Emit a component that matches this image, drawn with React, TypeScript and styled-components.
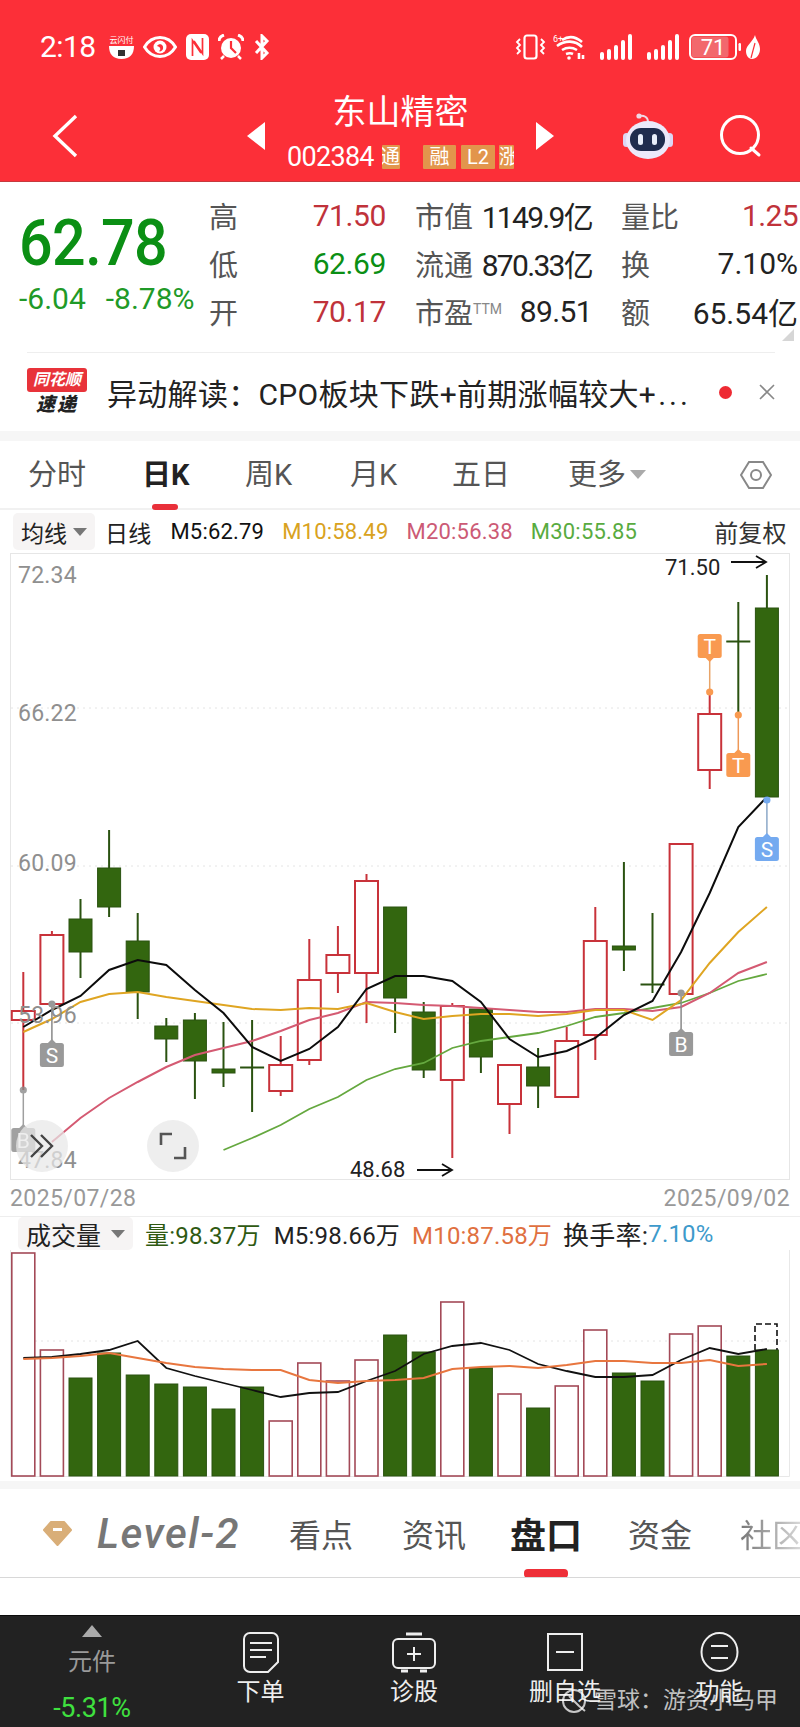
import React from "react"
import styled, { createGlobalStyle } from "styled-components"

const GlobalStyle = createGlobalStyle`
    html, body {
        margin: 0;
        padding: 0;
        background: #fff;
    }
    body {
        font-family: Roboto, "Noto Sans CJK SC", sans-serif;
    }
    #root {
        width: 800px;
        height: 1727px;
        overflow: hidden;
    }
`

const RED = "#c8323a"
const GREEN = "#33660f"
const GREEN_DARK = "#2a5210"

// chart coordinates are page pixels, the svg viewBox starts where the panel starts
const slotX = (i: number) => 23.3 + 28.6 * i

type Candle = [up: boolean, high: number, top: number, bottom: number, low: number]

const CANDLES: Candle[] = [
    [true, 972, 1011, 1020, 1090],
    [true, 931, 935, 1004, 1004],
    [false, 899, 919, 952, 978],
    [false, 830, 868, 907, 917],
    [false, 913, 941, 992, 1019],
    [false, 1018, 1026, 1039, 1062],
    [false, 1013, 1020, 1061, 1099],
    [false, 1022, 1069, 1073, 1087],
    [false, 1020, 1067, 1068, 1112],
    [true, 1036, 1065, 1091, 1096],
    [true, 939, 980, 1060, 1065],
    [true, 926, 955, 973, 993],
    [true, 874, 881, 973, 1023],
    [false, 907, 907, 998, 1033],
    [false, 1002, 1012, 1070, 1078],
    [true, 1003, 1006, 1080, 1158],
    [false, 1009, 1009, 1057, 1073],
    [true, 1065, 1065, 1104, 1134],
    [false, 1048, 1067, 1086, 1108],
    [true, 1027, 1041, 1097, 1097],
    [true, 907, 941, 1035, 1060],
    [false, 862, 946, 950, 971],
    [false, 913, 984, 985, 993],
    [true, 844, 844, 994, 994],
    [true, 692, 714, 770, 789],
    [false, 602, 641, 642, 713],
    [false, 575, 608, 797, 797],
]

const MA5 = [1027, 1010, 996, 970, 960, 965, 990, 1013, 1047, 1061, 1049, 1027, 989, 976, 976, 981, 1002, 1039, 1057, 1051, 1038, 1015, 1001, 952, 893, 827, 797]
const MA10 = [1032, 1019, 1002, 994, 992, 997, 1001, 1005, 1009, 1010, 1008, 1009, 1003, 1012, 1019, 1016, 1014, 1014, 1016, 1014, 1010, 1010, 1020, 1000, 963, 932, 907]
const MA20 = [1142, 1118, 1098, 1082, 1067, 1055, 1048, 1041, 1031, 1020, 1013, 1002, 1003, 1005, 1006, 1008, 1010, 1012, 1012, 1009, 1009, 1011, 1007, 993, 973, 962]
const MA30 = [1150, 1138, 1125, 1109, 1097, 1080, 1069, 1063, 1048, 1041, 1037, 1033, 1026, 1017, 1013, 1008, 1003, 993, 981, 974]

const VOLUMES: [boolean, number][] = [
    [true, 1253], [true, 1350], [false, 1378], [false, 1353], [false, 1375], [false, 1384], [false, 1387],
    [false, 1409], [false, 1387], [true, 1421], [true, 1363], [true, 1381], [true, 1360], [false, 1335],
    [false, 1352], [true, 1302], [false, 1368], [true, 1394], [false, 1408], [true, 1386], [true, 1330],
    [false, 1373], [false, 1381], [true, 1334], [true, 1326], [false, 1356], [false, 1350],
]

const VOL_MA5 = [1358, 1357, 1354, 1350, 1341, 1368, 1376, 1383, 1390, 1397, 1393, 1392, 1381, 1371, 1354, 1346, 1343, 1350, 1364, 1371, 1377, 1377, 1375, 1360, 1348, 1354, 1349]
const VOL_MA10 = [1359, 1358, 1356, 1353, 1358, 1363, 1367, 1369, 1370, 1370, 1380, 1383, 1381, 1380, 1378, 1369, 1367, 1366, 1368, 1365, 1361, 1361, 1363, 1363, 1360, 1366, 1364]

const linePoints = (values: number[], from = 0) =>
    values.map((y, i) => `${slotX(i + from).toFixed(1)},${y}`).join(" ")

const Page = styled.div`
    width: 800px;
    height: 1727px;
    display: flex;
    flex-direction: column;
    position: relative;
    color: #222;
`

/* red head */
const Header = styled.header`
    height: 181px;
    flex: none;
    background: #fc2f38;
    border-bottom: 1px solid #c63a3e;
    color: #fff;
`

const StatusBar = styled.div`
    height: 91px;
    box-sizing: border-box;
    padding: 2px 40px 0 40px;
    display: flex;
    align-items: center;
    justify-content: space-between;
`

const StatusGroup = styled.div`
    display: flex;
    align-items: center;
`

const StatusSlot = styled.span<{ $left: number }>`
    display: flex;
    margin-left: ${(p) => p.$left}px;
`

const Time = styled.span`
    font-size: 30px;
    width: 60px;
    letter-spacing: -0.6px;
`

const NavBar = styled.div`
    height: 90px;
    display: flex;
    align-items: center;
    padding-left: 52px;
`

const Ticker = styled.div`
    width: 271px;
    height: 90px;
    display: flex;
    flex-direction: column;
    align-items: center;
`

const StockName = styled.div`
    font-size: 34px;
    line-height: 38px;
    margin-top: 2px;
    letter-spacing: 0;
`

const CodeRow = styled.div`
    width: 227px;
    height: 24px;
    margin-top: 14px;
    display: flex;
    align-items: center;
    overflow: hidden;
`

const Code = styled.span`
    font-size: 27px;
    width: 95px;
    flex: none;
    letter-spacing: -0.7px;
`

const Tag = styled.span<{ $width: number; $clip?: "left" | "right"; $gap?: number }>`
    flex: none;
    width: ${(p) => p.$width}px;
    height: 24px;
    margin-left: ${(p) => p.$gap ?? 0}px;
    background: #e2954c;
    color: #fff;
    border-radius: 1px;
    font-size: 20px;
    line-height: 24px;
    display: flex;
    overflow: hidden;
    justify-content: ${(p) => (p.$clip === "left" ? "flex-end" : p.$clip === "right" ? "flex-start" : "center")};
    white-space: nowrap;
`

/* quote numbers */
const QuotePanel = styled.section`
    height: 170px;
    flex: none;
    display: flex;
    position: relative;
`

const PriceBlock = styled.div`
    width: 209px;
    flex: none;
    padding: 30px 0 0 19px;
    box-sizing: border-box;
`

const BigPrice = styled.div`
    font-size: 65px;
    line-height: 62px;
    font-weight: 500;
    color: #0b8f14;
    letter-spacing: -0.6px;
    transform: scaleX(0.91);
    transform-origin: left center;
`

const PriceChange = styled.div`
    display: flex;
    gap: 20px;
    margin-top: 8px;
    font-size: 30px;
    line-height: 34px;
    color: #1f9a28;
    white-space: nowrap;
`

const QuoteGrid = styled.div`
    padding-top: 9px;
    display: grid;
    grid-template-columns: 177px 177px 177px;
    grid-auto-rows: 48px;
    column-gap: 29px;
`

const QuoteCell = styled.div`
    display: flex;
    align-items: center;
    justify-content: space-between;
    white-space: nowrap;
`

const QuoteLabel = styled.span`
    font-size: 29px;
    color: #555;
`

const Sup = styled.sup`
    font-size: 14px;
    color: #888;
    vertical-align: 10px;
    line-height: 0;
`

const QuoteValue = styled.span<{ $color?: string; $spacing?: number }>`
    font-size: 30px;
    color: ${(p) => p.$color ?? "#222"};
    letter-spacing: ${(p) => p.$spacing ?? -0.6}px;
`

const CornerMark = styled.div`
    position: absolute;
    right: 6px;
    bottom: 11px;
    width: 12px;
    height: 12px;
    background: #d6d6d6;
    clip-path: polygon(100% 0, 100% 100%, 0 100%);
`

const NewsBar = styled.section`
    height: 79px;
    flex: none;
    margin: 0 25px 0 27px;
    border-top: 1px solid #eee;
    display: flex;
    align-items: center;
    position: relative;
    box-sizing: border-box;
`

const NewsLogo = styled.div`
    width: 60px;
    flex: none;
    text-align: center;
    margin-right: 20px;
`

const LogoTop = styled.div`
    background: #e8333a;
    color: #fff;
    font-size: 16px;
    line-height: 24px;
    font-style: italic;
    font-weight: 700;
    border-radius: 3px;
    white-space: nowrap;
`

const LogoBottom = styled.div`
    color: #222;
    font-size: 19px;
    line-height: 25px;
    font-style: italic;
    font-weight: 900;
    letter-spacing: 2px;
`

const NewsText = styled.div`
    font-size: 30px;
    color: #222;
    white-space: nowrap;
    flex: 1;
    letter-spacing: 0.3px;
`

const NewsDots = styled.span`
    letter-spacing: 3px;
    margin-left: 2px;
`

const RedDot = styled.span`
    width: 13px;
    height: 13px;
    border-radius: 50%;
    background: #ee2a33;
    margin-left: 28px;
    flex: none;
`

const Band = styled.div<{ $height: number }>`
    height: ${(p) => p.$height}px;
    flex: none;
    background: #f6f6f6;
`

/* period switcher */
const PeriodTabs = styled.nav`
    height: 69px;
    flex: none;
    box-sizing: border-box;
    padding-left: 28px;
    border-bottom: 2px solid #f1f1f1;
    display: grid;
    grid-template-columns: 114px 103px 105px 102px 116px 172px 32px;
    align-items: center;
    position: relative;
`

const PeriodTab = styled.span<{ $active?: boolean }>`
    font-size: 29px;
    line-height: 40px;
    color: ${(p) => (p.$active ? "#222" : "#555")};
    font-weight: ${(p) => (p.$active ? 700 : 400)};
    position: relative;
    display: flex;
    align-items: center;
    gap: 4px;
    white-space: nowrap;
    ${(p) =>
        p.$active &&
        `&::after {
            content: "";
            position: absolute;
            left: 10px;
            bottom: -15px;
            width: 26px;
            height: 6px;
            border-radius: 3px;
            background: #e9303a;
        }`}
`

const Caret = styled.span<{ $size?: number; $color?: string }>`
    display: inline-block;
    flex: none;
    width: 0;
    height: 0;
    border-left: ${(p) => p.$size ?? 7}px solid transparent;
    border-right: ${(p) => p.$size ?? 7}px solid transparent;
    border-top: ${(p) => (p.$size ?? 7) + 1}px solid ${(p) => p.$color ?? "#777"};
`

const MaRow = styled.div`
    height: 43px;
    flex: none;
    display: flex;
    align-items: center;
    padding-left: 13px;
    white-space: nowrap;
`

const Chip = styled.div<{ $width: number; $height: number }>`
    width: ${(p) => p.$width}px;
    height: ${(p) => p.$height}px;
    flex: none;
    box-sizing: border-box;
    padding-left: 8px;
    background: #f6f4f4;
    border-radius: 5px;
    display: flex;
    align-items: center;
    justify-content: space-between;
    padding-right: 8px;
`

const ChipLabel = styled.span<{ $size: number }>`
    font-size: ${(p) => p.$size}px;
    color: #222;
`

const Indicator = styled.span<{ $color: string; $left: number; $size?: number }>`
    color: ${(p) => p.$color};
    margin-left: ${(p) => p.$left}px;
    font-size: ${(p) => p.$size ?? 22}px;
    letter-spacing: 0.2px;
`

const ChartWrap = styled.div`
    height: 627px;
    flex: none;
    position: relative;
`

const ChartSvg = styled.svg`
    display: block;
    position: absolute;
    inset: 0;
`

const RoundButton = styled.div<{ $left: number }>`
    position: absolute;
    left: ${(p) => p.$left}px;
    top: 567px;
    width: 52px;
    height: 52px;
    border-radius: 50%;
    background: rgba(232, 232, 232, 0.72);
    display: flex;
    align-items: center;
    justify-content: center;
`

const DateRow = styled.div`
    height: 37px;
    flex: none;
    box-sizing: border-box;
    padding: 0 10px;
    border-bottom: 1px solid #eee;
    display: flex;
    align-items: center;
    justify-content: space-between;
    font-size: 23px;
    color: #999;
    letter-spacing: 0.4px;
`

const VolumeRow = styled.div`
    height: 33px;
    flex: none;
    display: flex;
    align-items: center;
    padding-left: 18px;
    white-space: nowrap;
`

/* news tabs under the chart */
const InfoTabs = styled.nav`
    height: 89px;
    flex: none;
    box-sizing: border-box;
    padding-left: 43px;
    border-bottom: 1px solid #d8d8d8;
    display: flex;
    align-items: center;
    overflow: hidden;
    position: relative;
    white-space: nowrap;
`

const LevelMark = styled.span`
    flex: none;
    font-size: 42px;
    font-style: italic;
    font-weight: 500;
    color: #777;
    margin: 0 52px 0 25px;
    width: 140px;
    letter-spacing: 1.5px;
`

const InfoTab = styled.span<{ $active?: boolean; $left: number; $faded?: boolean }>`
    margin-left: ${(p) => p.$left}px;
    flex: none;
    font-size: ${(p) => (p.$active ? 36 : 32)}px;
    font-weight: ${(p) => (p.$active ? 700 : 400)};
    color: ${(p) => (p.$active ? "#222" : "#555")};
    position: relative;
    ${(p) =>
        p.$faded &&
        `background: linear-gradient(90deg, #777, #ddd);
        -webkit-background-clip: text;
        background-clip: text;
        color: transparent;`}
    ${(p) =>
        p.$active &&
        `&::after {
            content: "";
            position: absolute;
            left: 14px;
            bottom: -19px;
            width: 44px;
            height: 9px;
            border-radius: 4px;
            background: #ee2f38;
        }`}
`

const Spacer = styled.div`
    flex: 1;
    background: #fff;
`

/* dark action bar */
const BottomBar = styled.footer`
    height: 112px;
    flex: none;
    box-sizing: border-box;
    background: #222;
    border-top: 1px solid #0c0c0c;
    display: grid;
    grid-template-columns: 184px 153px 154px 148px 161px;
    position: relative;
`

const BottomIndex = styled.div`
    display: flex;
    flex-direction: column;
    align-items: center;
    padding-top: 9px;
`

const IndexArrow = styled.span`
    width: 0;
    height: 0;
    border-left: 10px solid transparent;
    border-right: 10px solid transparent;
    border-bottom: 12px solid #aaa;
`

const IndexName = styled.span`
    font-size: 24px;
    line-height: 32px;
    margin-top: 9px;
    color: #9a9a9a;
`

const IndexChange = styled.span`
    font-size: 27px;
    line-height: 30px;
    margin-top: 15px;
    color: #3fe03f;
    letter-spacing: -0.4px;
`

const BottomAction = styled.div`
    display: flex;
    flex-direction: column;
    align-items: center;
    padding-top: 16px;
    color: #eee;
    font-size: 24px;
    line-height: 32px;
    white-space: nowrap;
`

const ActionIcon = styled.svg`
    display: block;
    margin-bottom: 3px;
`

const Watermark = styled.div`
    position: absolute;
    left: 561px;
    top: 72px;
    display: flex;
    align-items: center;
    gap: 5px;
    font-size: 23px;
    line-height: 26px;
    color: rgba(255, 255, 255, 0.72);
    white-space: nowrap;
`

const ChevronLeft = () => (
    <svg width="26" height="44" viewBox="0 0 26 44" fill="none" stroke="#fff" strokeWidth="3.4" style={{ marginRight: 169, flex: "none" }}>
        <path d="M24 2 3 22l21 20" />
    </svg>
)

const NavTriangle = ({ dir }: { dir: "left" | "right" }) => (
    <svg width="18" height="28" viewBox="0 0 18 28" style={{ flex: "none" }}>
        <path d={dir === "left" ? "M18 0v28L0 14z" : "M0 0v28l18-14z"} fill="#fff" />
    </svg>
)

const RobotIcon = () => (
    <svg width="52" height="46" viewBox="0 0 52 46" style={{ marginLeft: 68, flex: "none" }}>
        <path d="M17 3c5-1 9 1 9 6" fill="none" stroke="#f0d8e4" strokeWidth="2" />
        <circle cx="17" cy="3" r="2.600" fill="#f0d8e4" />
        <rect x="1" y="20" width="7" height="14" rx="3.500" fill="#dcd6f4" />
        <rect x="44" y="20" width="7" height="14" rx="3.500" fill="#dcd6f4" />
        <ellipse cx="26" cy="27" rx="22" ry="19" fill="#ece9fa" />
        <rect x="8" y="15" width="35" height="23" rx="11" fill="#1f2c4e" />
        <rect x="16" y="21" width="5" height="11" rx="2.500" fill="#e8eefa" />
        <rect x="30" y="21" width="5" height="11" rx="2.500" fill="#e8eefa" />
    </svg>
)

const SearchIcon = () => (
    <svg width="44" height="44" viewBox="0 0 44 44" fill="none" stroke="#fff" strokeWidth="3" style={{ marginLeft: 45, flex: "none" }}>
        <circle cx="21" cy="21" r="18.5" />
        <path d="M32 34l8 7" strokeLinecap="round" />
    </svg>
)

const PayIcon = () => (
    <svg width="25" height="24" viewBox="0 0 25 24">
        <path d="M0 11h25c0 8-4 13-12.500 13S0 19 0 11z" fill="#fff" />
        <text x="12.500" y="8" textAnchor="middle" fontSize="8" fill="#fff">云闪付</text>
        <rect x="9" y="15" width="7" height="6" fill="#333" />
    </svg>
)

const EyeIcon = () => (
    <svg width="34" height="22" viewBox="0 0 34 22">
        <path d="M1.500 11C6 3.500 12 1.500 17 1.500s11 2 15.500 9.500c-4.500 7.500-10.500 9.500-15.500 9.500S6 18.500 1.500 11z" fill="#fc2f38" stroke="#fff" strokeWidth="3" />
        <circle cx="17" cy="11" r="6.500" fill="#fff" />
        <path d="M14 10c2-3 7-2 6 3-1 2-3 3-4 2 2-1 2-4-2-5z" fill="#fc2f38" />
    </svg>
)

const NfcIcon = () => (
    <svg width="23" height="26" viewBox="0 0 23 26" fill="none">
        <rect x="0" y="0" width="23" height="26" rx="5" fill="#fff" />
        <path d="M6.500 22V6.500L15 19M16.500 4v15.500L8 7" stroke="#fc2f38" strokeWidth="1.700" />
    </svg>
)

const AlarmIcon = () => (
    <svg width="26" height="26" viewBox="0 0 26 26" fill="none" stroke="#fff">
        <circle cx="13" cy="14" r="10" fill="#fff" stroke="none" />
        <path d="M13 7v7l5 5" stroke="#fc2f38" strokeWidth="2.200" />
        <path d="M1 7c0-3 2-5 5-6M25 7c0-3-2-5-5-6" strokeWidth="3" />
        <path d="M6 22l-3 3M20 22l3 3" strokeWidth="2.500" />
    </svg>
)

const BluetoothIcon = () => (
    <svg width="16" height="26" viewBox="0 0 16 26" fill="none" stroke="#fff" strokeWidth="3">
        <path d="M2 7l11 12-5 5V2l5 5L2 19" />
    </svg>
)

const VibrateIcon = () => (
    <svg width="31" height="26" viewBox="0 0 31 26" fill="none" stroke="#fff" strokeWidth="2.200">
        <rect x="9.500" y="1.500" width="12" height="23" rx="2.500" />
        <path d="M5 5 2 8l3 3-3 3 3 3-3 3M26 5l3 3-3 3 3 3-3 3 3 3" strokeWidth="1.800" />
    </svg>
)

const WifiIcon = () => (
    <svg width="34" height="26" viewBox="0 0 34 26" fill="none" stroke="#fff" strokeWidth="2.600">
        <text x="0" y="8" fontSize="9" fill="#fff" stroke="none">6+</text>
        <path d="M9 6c6-4 13-4 20 2M4 12c8-6 18-6 25 1M9 16c5-3 10-3 15 0M13 20c3-1 5-1 7 0" />
        <circle cx="16" cy="24" r="1.800" fill="#fff" stroke="none" />
        <path d="M26 19v6M30 21v4" />
    </svg>
)

const SignalIcon = () => (
    <svg width="33" height="26" viewBox="0 0 33 26" fill="#fff">
        <rect x="0" y="18" width="4" height="8" rx="2" />
        <rect x="7" y="15" width="4" height="11" rx="2" />
        <rect x="14" y="11" width="4" height="15" rx="2" />
        <rect x="21" y="6" width="4" height="20" rx="2" />
        <rect x="28" y="0" width="4" height="26" rx="2" />
    </svg>
)

const BatteryIcon = () => (
    <svg width="52" height="26" viewBox="0 0 52 26">
        <rect x="2.500" y="2.500" width="37" height="21" rx="3" fill="#f2686d" />
        <rect x="1" y="1" width="46" height="24" rx="5" fill="none" stroke="#fff" strokeWidth="2" />
        <rect x="49.500" y="9" width="2.500" height="8" rx="1.200" fill="#fff" />
        <text x="24" y="21" textAnchor="middle" fontSize="22" fill="#fff" fontFamily="Roboto">71</text>
    </svg>
)

const LeafIcon = () => (
    <svg width="14" height="24" viewBox="0 0 14 24">
        <path d="M9 0c1 5 5 8 5 14 0 6-4 10-8 10s-6-4-6-8C0 10 7 7 9 0z" fill="#fff" />
        <path d="M9 8 5 23" stroke="#fc2f38" strokeWidth="1.200" />
    </svg>
)

const SettingsIcon = () => (
    <svg width="32" height="30" viewBox="0 0 32 30" fill="none" stroke="#888" strokeWidth="2">
        <path d="M9 2h14l8 13-8 13H9L1 15z" />
        <circle cx="16" cy="15" r="5" />
    </svg>
)

const DiamondIcon = () => (
    <svg width="29" height="25" viewBox="0 0 29 25" style={{ flex: "none" }}>
        <path d="M8 1h13l7 8-13.500 15L1 9z" fill="#d9ae78" stroke="#d9ae78" strokeWidth="2" strokeLinejoin="round" />
        <rect x="10" y="7" width="9" height="3" fill="#fff" />
    </svg>
)

const CandleMark = ({ c, i }: { c: Candle; i: number }) => {
    const [up, high, top, bottom, low] = c
    const x = slotX(i)
    const color = up ? RED : GREEN_DARK
    return (
        <g>
            <line x1={x} x2={x} y1={high} y2={top} stroke={color} strokeWidth="2" />
            <line x1={x} x2={x} y1={bottom} y2={low} stroke={color} strokeWidth="2" />
            <rect
                x={x - 11.5}
                y={top}
                width={23}
                height={Math.max(bottom - top, 1)}
                fill={up ? "#fff" : GREEN}
                stroke={up ? RED : GREEN_DARK}
                strokeWidth={up ? 2 : 1}
            />
        </g>
    )
}

// trade marker: a flag with a stem to a dot on the candle
const Flag = ({ i, boxY, dotY, letter, color, stem, opacity = 1 }: { i: number; boxY: number; dotY: number; letter: string; color: string; stem: string; opacity?: number }) => {
    const x = slotX(i)
    const below = boxY > dotY
    return (
        <g opacity={opacity}>
            <line x1={x} x2={x} y1={dotY} y2={below ? boxY : boxY + 24} stroke={stem} strokeWidth="1.500" />
            <circle cx={x} cy={dotY} r="3.600" fill={color} />
            <rect x={x - 12} y={boxY} width={24} height={24} rx="2.500" fill={color} />
            <path d={below ? `M${x - 4} ${boxY}l4-4 4 4z` : `M${x - 4} ${boxY + 24}l4 4 4-4z`} fill={color} />
            <text x={x} y={boxY + 19.5} textAnchor="middle" fontSize="21" fill="#fff" fontFamily="Roboto">{letter}</text>
        </g>
    )
}

const AxisLabel = ({ y, children }: { y: number; children: string }) => (
    <text x={18} y={y} fontSize="23" fill="#8f8f8f" fontFamily="Roboto" letterSpacing="0.2">{children}</text>
)

const PriceChart = () => (
    <ChartSvg width="800" height="627" viewBox="0 553 800 627">
        <rect x="10.500" y="553.500" width="779" height="626" fill="#fff" stroke="#e6e6e6" />
        {[708, 866, 1023].map((y) => (
            <line key={y} x1="11" x2="789" y1={y} y2={y} stroke="#e4e4e4" strokeDasharray="2 4" />
        ))}
        {CANDLES.map((c, i) => <CandleMark key={i} c={c} i={i} />)}
        <polyline points={linePoints(MA30, 7)} fill="none" stroke="#65a83f" strokeWidth="1.800" />
        <polyline points={linePoints(MA20, 1)} fill="none" stroke="#d45a72" strokeWidth="2" />
        <polyline points={linePoints(MA10)} fill="none" stroke="#dfa522" strokeWidth="2" />
        <polyline points={linePoints(MA5)} fill="none" stroke="#0c0c0c" strokeWidth="2" />
        <Flag i={24} boxY={634} dotY={692} letter="T" color="#f99a50" stem="#e8a468" />
        <Flag i={25} boxY={753} dotY={715} letter="T" color="#f99a50" stem="#ee9858" />
        <Flag i={26} boxY={837} dotY={800} letter="S" color="#74aaf0" stem="#8ba8c8" />
        <Flag i={23} boxY={1032} dotY={993} letter="B" color="#999" stem="#888" />
        <Flag i={1} boxY={1043} dotY={1004} letter="S" color="#999" stem="#888" />
        <Flag i={0} boxY={1128} dotY={1090} letter="B" color="#8a8a8a" stem="#888" opacity={0.8} />
        <AxisLabel y={583}>72.34</AxisLabel>
        <AxisLabel y={721}>66.22</AxisLabel>
        <AxisLabel y={871}>60.09</AxisLabel>
        <AxisLabel y={1023}>53.96</AxisLabel>
        <AxisLabel y={1168}>47.84</AxisLabel>
        <text x="665" y="575" fontSize="22" fill="#222" fontFamily="Roboto">71.50</text>
        <path d="M731 562h34m-9-6 10 6-10 6" fill="none" stroke="#111" strokeWidth="1.800" />
        <text x="350" y="1177" fontSize="22" fill="#222" fontFamily="Roboto">48.68</text>
        <path d="M417 1170h34m-9-6 10 6-10 6" fill="none" stroke="#111" strokeWidth="1.800" />
    </ChartSvg>
)

const VolumeChart = () => (
    <svg width="800" height="231" viewBox="0 1250 800 231" style={{ display: "block", flex: "none" }}>
        <path d="M10.500 1250V1476.500H789.500V1250" fill="none" stroke="#e8e8e8" />
        <line x1="11" x2="789" y1="1341" y2="1341" stroke="#e4e4e4" strokeDasharray="2 4" />
        {VOLUMES.map(([up, top], i) => (
            <rect
                key={i}
                x={slotX(i) - 11.5}
                y={top}
                width={23}
                height={1476 - top}
                fill={up ? "#fff" : GREEN}
                stroke={up ? "#a34a58" : GREEN_DARK}
                strokeWidth={up ? 1.6 : 1}
            />
        ))}
        <path d="M755 1350v-26h22v26" fill="none" stroke="#111" strokeWidth="1.600" strokeDasharray="6 3" />
        <polyline points={linePoints(VOL_MA5)} fill="none" stroke="#111" strokeWidth="1.800" />
        <polyline points={linePoints(VOL_MA10)} fill="none" stroke="#e8763f" strokeWidth="2" />
    </svg>
)

const ExpandIcon = () => (
    <svg width="28" height="28" viewBox="0 0 28 28" fill="none" stroke="#555" strokeWidth="2.600">
        <path d="M2 13V2h11M26 15v11H15" />
    </svg>
)

const ForwardIcon = () => (
    <svg width="28" height="26" viewBox="0 0 28 26" fill="none" stroke="#444" strokeWidth="2.400">
        <path d="M3 2l11 11L3 24M13 2l11 11-11 11" />
    </svg>
)

const App: React.FC = () => (
    <Page>
        <GlobalStyle />
        <Header>
            <StatusBar>
                <StatusGroup>
                    <Time>2:18</Time>
                    <StatusSlot $left={9}><PayIcon /></StatusSlot>
                    <StatusSlot $left={9}><EyeIcon /></StatusSlot>
                    <StatusSlot $left={9}><NfcIcon /></StatusSlot>
                    <StatusSlot $left={9}><AlarmIcon /></StatusSlot>
                    <StatusSlot $left={10}><BluetoothIcon /></StatusSlot>
                </StatusGroup>
                <StatusGroup>
                    <VibrateIcon />
                    <StatusSlot $left={7}><WifiIcon /></StatusSlot>
                    <StatusSlot $left={13}><SignalIcon /></StatusSlot>
                    <StatusSlot $left={14}><SignalIcon /></StatusSlot>
                    <StatusSlot $left={9}><BatteryIcon /></StatusSlot>
                    <StatusSlot $left={5}><LeafIcon /></StatusSlot>
                </StatusGroup>
            </StatusBar>
            <NavBar>
                <ChevronLeft />
                <NavTriangle dir="left" />
                <Ticker>
                    <StockName>东山精密</StockName>
                    <CodeRow>
                        <Code>002384</Code>
                        <Tag $width={18} $clip="left">通</Tag>
                        <Tag $width={33} $gap={23}>融</Tag>
                        <Tag $width={34} $gap={5}>L2</Tag>
                        <Tag $width={15} $gap={4} $clip="right">涨</Tag>
                    </CodeRow>
                </Ticker>
                <NavTriangle dir="right" />
                <RobotIcon />
                <SearchIcon />
            </NavBar>
        </Header>

        <QuotePanel>
            <PriceBlock>
                <BigPrice>62.78</BigPrice>
                <PriceChange>
                    <span>-6.04</span>
                    <span>-8.78%</span>
                </PriceChange>
            </PriceBlock>
            <QuoteGrid>
                <QuoteCell><QuoteLabel>高</QuoteLabel><QuoteValue $color="#c0323a" $spacing={-0.4}>71.50</QuoteValue></QuoteCell>
                <QuoteCell><QuoteLabel>市值</QuoteLabel><QuoteValue $spacing={-1.7}>1149.9亿</QuoteValue></QuoteCell>
                <QuoteCell><QuoteLabel>量比</QuoteLabel><QuoteValue $color="#c0323a">1.25</QuoteValue></QuoteCell>
                <QuoteCell><QuoteLabel>低</QuoteLabel><QuoteValue $color="#0b8f14" $spacing={-0.4}>62.69</QuoteValue></QuoteCell>
                <QuoteCell><QuoteLabel>流通</QuoteLabel><QuoteValue $spacing={-1.7}>870.33亿</QuoteValue></QuoteCell>
                <QuoteCell><QuoteLabel>换</QuoteLabel><QuoteValue $spacing={0}>7.10%</QuoteValue></QuoteCell>
                <QuoteCell><QuoteLabel>开</QuoteLabel><QuoteValue $color="#c0323a" $spacing={-0.4}>70.17</QuoteValue></QuoteCell>
                <QuoteCell><QuoteLabel>市盈<Sup>TTM</Sup></QuoteLabel><QuoteValue>89.51</QuoteValue></QuoteCell>
                <QuoteCell><QuoteLabel>额</QuoteLabel><QuoteValue $spacing={0}>65.54亿</QuoteValue></QuoteCell>
            </QuoteGrid>
            <CornerMark />
        </QuotePanel>

        <NewsBar>
            <NewsLogo>
                <LogoTop>同花顺</LogoTop>
                <LogoBottom>速递</LogoBottom>
            </NewsLogo>
            <NewsText>异动解读：CPO板块下跌+前期涨幅较大+<NewsDots>...</NewsDots></NewsText>
            <RedDot />
            <svg width="16" height="16" viewBox="0 0 16 16" stroke="#888" strokeWidth="1.600" style={{ marginLeft: 27, flex: "none" }}>
                <path d="M1 1l14 14M15 1 1 15" />
            </svg>
        </NewsBar>
        <Band $height={10} />

        <PeriodTabs>
            <PeriodTab>分时</PeriodTab>
            <PeriodTab $active>日K</PeriodTab>
            <PeriodTab>周K</PeriodTab>
            <PeriodTab>月K</PeriodTab>
            <PeriodTab>五日</PeriodTab>
            <PeriodTab>更多<Caret $size={8} $color="#aaa" /></PeriodTab>
            <SettingsIcon />
        </PeriodTabs>

        <MaRow>
            <Chip $width={82} $height={37}>
                <ChipLabel $size={23}>均线</ChipLabel>
                <Caret />
            </Chip>
            <Indicator $color="#222" $left={10} $size={23}>日线</Indicator>
            <Indicator $color="#111" $left={19}>M5:62.79</Indicator>
            <Indicator $color="#d9a220" $left={18}>M10:58.49</Indicator>
            <Indicator $color="#cc5a75" $left={18}>M20:56.38</Indicator>
            <Indicator $color="#58ab40" $left={18}>M30:55.85</Indicator>
            <Indicator $color="#333" $left={77} $size={24}>前复权</Indicator>
        </MaRow>

        <ChartWrap>
            <PriceChart />
            <RoundButton $left={16}><ForwardIcon /></RoundButton>
            <RoundButton $left={147}><ExpandIcon /></RoundButton>
        </ChartWrap>

        <DateRow>
            <span>2025/07/28</span>
            <span>2025/09/02</span>
        </DateRow>

        <VolumeRow>
            <Chip $width={115} $height={33}>
                <ChipLabel $size={25}>成交量</ChipLabel>
                <Caret />
            </Chip>
            <Indicator $color="#2f5a12" $left={12} $size={24}>量:98.37万</Indicator>
            <Indicator $color="#222" $left={13} $size={24}>M5:98.66万</Indicator>
            <Indicator $color="#e07040" $left={12} $size={24}>M10:87.58万</Indicator>
            <Indicator $color="#222" $left={11} $size={26}>换手率:</Indicator>
            <Indicator $color="#3d9acb" $left={0} $size={24}>7.10%</Indicator>
        </VolumeRow>

        <VolumeChart />
        <Band $height={8} />

        <InfoTabs>
            <DiamondIcon />
            <LevelMark>Level-2</LevelMark>
            <InfoTab $left={0}>看点</InfoTab>
            <InfoTab $left={49}>资讯</InfoTab>
            <InfoTab $left={44} $active>盘口</InfoTab>
            <InfoTab $left={46}>资金</InfoTab>
            <InfoTab $left={48} $faded>社区</InfoTab>
        </InfoTabs>
        <Spacer />

        <BottomBar>
            <BottomIndex>
                <IndexArrow />
                <IndexName>元件</IndexName>
                <IndexChange>-5.31%</IndexChange>
            </BottomIndex>
            <BottomAction>
                <ActionIcon width="36" height="41" viewBox="0 0 36 41" fill="none" stroke="#eee" strokeWidth="2">
                    <path d="M7 1h22a6 6 0 0 1 6 6v23l-10 10H7a6 6 0 0 1-6-6V7a6 6 0 0 1 6-6z" />
                    <path d="M7 11h22M7 18h22M7 25h16" />
                </ActionIcon>
                下单
            </BottomAction>
            <BottomAction>
                <ActionIcon width="44" height="41" viewBox="0 0 44 41" fill="none" stroke="#eee" strokeWidth="2">
                    <path d="M14 2h16" strokeWidth="3" />
                    <rect x="1" y="7" width="42" height="29" rx="5" />
                    <path d="M22 15v14M15 22h14" />
                    <path d="M9 39h7M28 39h7" strokeWidth="3" />
                </ActionIcon>
                诊股
            </BottomAction>
            <BottomAction>
                <ActionIcon width="36" height="41" viewBox="0 0 36 41" fill="none" stroke="#eee" strokeWidth="2">
                    <rect x="1" y="2" width="34" height="36" />
                    <path d="M9 20h18" />
                </ActionIcon>
                删自选
            </BottomAction>
            <BottomAction>
                <ActionIcon width="39" height="41" viewBox="0 0 39 41" fill="none" stroke="#eee" strokeWidth="2">
                    <ellipse cx="19.500" cy="20" rx="18" ry="19" />
                    <path d="M11 14h17M11 26h17" />
                </ActionIcon>
                功能
            </BottomAction>
            <Watermark>
                <svg width="28" height="24" viewBox="0 0 28 24" fill="none" stroke="rgba(255,255,255,0.75)" strokeWidth="2">
                    <circle cx="13" cy="12" r="11" />
                    <path d="M8 7l10 10M18 17l6 5" />
                </svg>
                雪球：游资小马甲
            </Watermark>
        </BottomBar>
    </Page>
)

export default App
